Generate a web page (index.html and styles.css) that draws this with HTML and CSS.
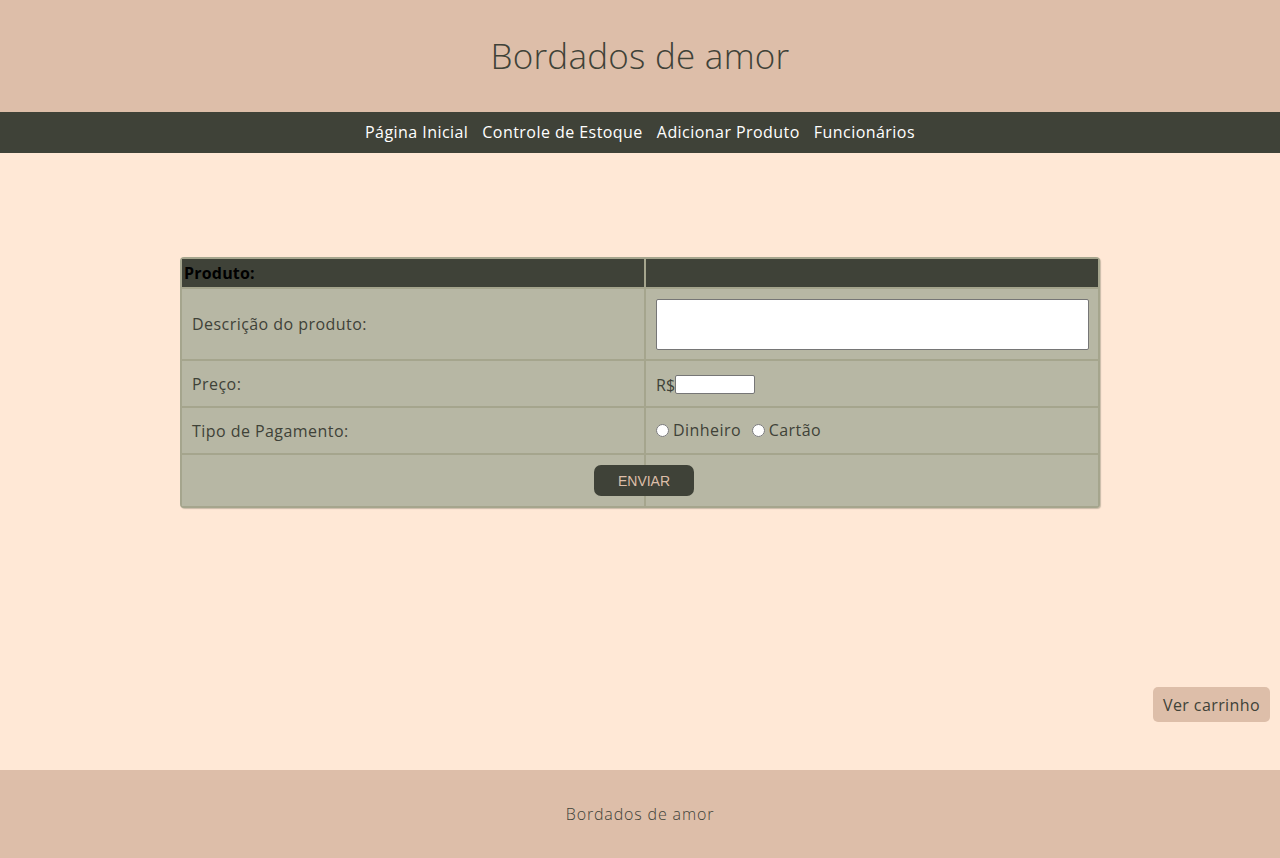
FILE: index.html
```html
<!DOCTYPE html>
<html lang="pt-BR">
<head>
<meta charset="utf-8">
<title>Bordados de amor</title>
<link rel="stylesheet" href="styles.css">
</head>
<body>
<header class="site-header">
  <h1 class="site-title">Bordados de amor</h1>
</header>
<nav class="site-nav">
  <a href="#" class="nav-link">Página Inicial</a>
  <a href="#" class="nav-link">Controle de Estoque</a>
  <a href="#" class="nav-link">Adicionar Produto</a>
  <a href="#" class="nav-link">Funcionários</a>
</nav>
<main class="content">
  <form class="product-form">
    <table class="product-table">
      <colgroup>
        <col class="col-label">
        <col class="col-field">
      </colgroup>
      <thead>
        <tr class="row-head">
          <th class="head-cell">Produto:</th>
          <th class="head-cell"></th>
        </tr>
      </thead>
      <tbody>
        <tr class="row-desc">
          <td class="cell">Descrição do produto:</td>
          <td class="cell"><textarea class="desc-input"></textarea></td>
        </tr>
        <tr class="row-simple">
          <td class="cell">Preço:</td>
          <td class="cell"><span class="currency">R$</span><input type="text" class="price-input"></td>
        </tr>
        <tr class="row-simple">
          <td class="cell">Tipo de Pagamento:</td>
          <td class="cell">
            <label class="radio-label"><input type="radio" name="pag" class="radio">Dinheiro</label>
            <label class="radio-label"><input type="radio" name="pag" class="radio">Cartão</label>
          </td>
        </tr>
        <tr class="row-submit">
          <td class="cell submit-cell" colspan="2"><button type="button" class="submit-btn">ENVIAR</button></td>
        </tr>
      </tbody>
    </table>
  </form>
  <div class="cart-row">
    <button type="button" class="cart-btn">Ver carrinho</button>
  </div>
</main>
<footer class="site-footer">
  <p class="footer-text">Bordados de amor</p>
</footer>
</body>
</html>
```

FILE: styles.css
```css
* { box-sizing: border-box; }

html, body {
  margin: 0;
  padding: 0;
}

body {
  font-family: "Open Sans", "Noto Sans", sans-serif;
  font-size: 16px;
  letter-spacing: 0.45px;
  color: #3f4238;
  background: #ffe8d6;
}

.site-header {
  height: 112px;
  background: #ddbea9;
  display: flex;
  align-items: center;
  justify-content: center;
}

.site-title {
  margin: 0;
  font-size: 35px;
  font-weight: 300;
  letter-spacing: 0.25px;
  color: #3f4238;
  line-height: 1;
  padding-bottom: 2px;
}

.site-nav {
  height: 41px;
  background: #3f4238;
  display: flex;
  align-items: center;
  justify-content: center;
  gap: 14px;
}

.nav-link {
  color: #ffffff;
  text-decoration: none;
  font-size: 16px;
  line-height: 24px;
  padding-bottom: 2px;
}

.content {
  height: 617px;
  padding-top: 104px;
  display: flex;
  flex-direction: column;
}

.product-form {
  margin: 0 auto;
}

.product-table {
  width: 920px;
  table-layout: fixed;
  border-collapse: separate;
  border-spacing: 2px;
  background: #a5a58d;
  border-radius: 4px;
  box-shadow: 1px 1px 1px rgba(120, 120, 100, 0.4);
}

.col-label { width: 462px; }
.col-field { width: 452px; }

.row-head { height: 28px; }
.row-desc { height: 70px; }
.row-simple { height: 45px; }
.row-submit { height: 51px; }

.head-cell {
  padding: 0 2px;
  background: #3f4238;
  color: #000000;
  font-weight: 700;
  text-align: left;
  font-size: 16px;
  letter-spacing: 0.2px;
}

.cell {
  background: #b7b7a4;
  padding: 0 10px;
  line-height: 24px;
  color: #3f4238;
  vertical-align: middle;
}

.desc-input {
  display: block;
  width: 433px;
  height: 51px;
  margin: 1px 0 0;
  border: 1px solid #767676;
  border-radius: 2px;
  background: #ffffff;
  resize: none;
}

.currency {
  vertical-align: middle;
  letter-spacing: 0;
}

.price-input {
  width: 80px;
  height: 19px;
  margin: 0;
  padding: 0 2px;
  border: 1px solid #767676;
  border-radius: 2px;
  background: #fff;
  vertical-align: middle;
}

.radio-label {
  margin-right: 6px;
  display: inline-flex;
  align-items: center;
}

.radio {
  width: 13px;
  height: 13px;
  margin: 0 4px 0 0;
}

.submit-cell {
  padding: 0 0 0 8px;
  text-align: center;
  background: linear-gradient(to right, #b7b7a4 0, #b7b7a4 462px, #a5a58d 462px, #a5a58d 464px, #b7b7a4 464px);
}

.submit-btn {
  width: 100px;
  height: 31px;
  border: none;
  border-radius: 7px;
  background: #3f4238;
  color: #ddbea9;
  font-family: "Liberation Sans", Arial, sans-serif;
  font-size: 14px;
  letter-spacing: 0;
  vertical-align: middle;
}

.cart-row {
  margin-top: auto;
  margin-bottom: 48px;
  padding-right: 10px;
  display: flex;
  justify-content: flex-end;
}

.cart-btn {
  height: 35px;
  padding: 0 10px;
  border: none;
  border-radius: 5px;
  background: #ddbea9;
  color: #3f4238;
  font-family: "Open Sans", "Noto Sans", sans-serif;
  font-size: 16px;
  letter-spacing: 0.4px;
}

.site-footer {
  height: 88px;
  background: #ddbea9;
  display: flex;
  align-items: center;
  justify-content: center;
}

.footer-text {
  margin: 0;
  font-size: 16px;
  font-weight: 300;
  letter-spacing: 0.85px;
  color: #3f4238;
}
```
